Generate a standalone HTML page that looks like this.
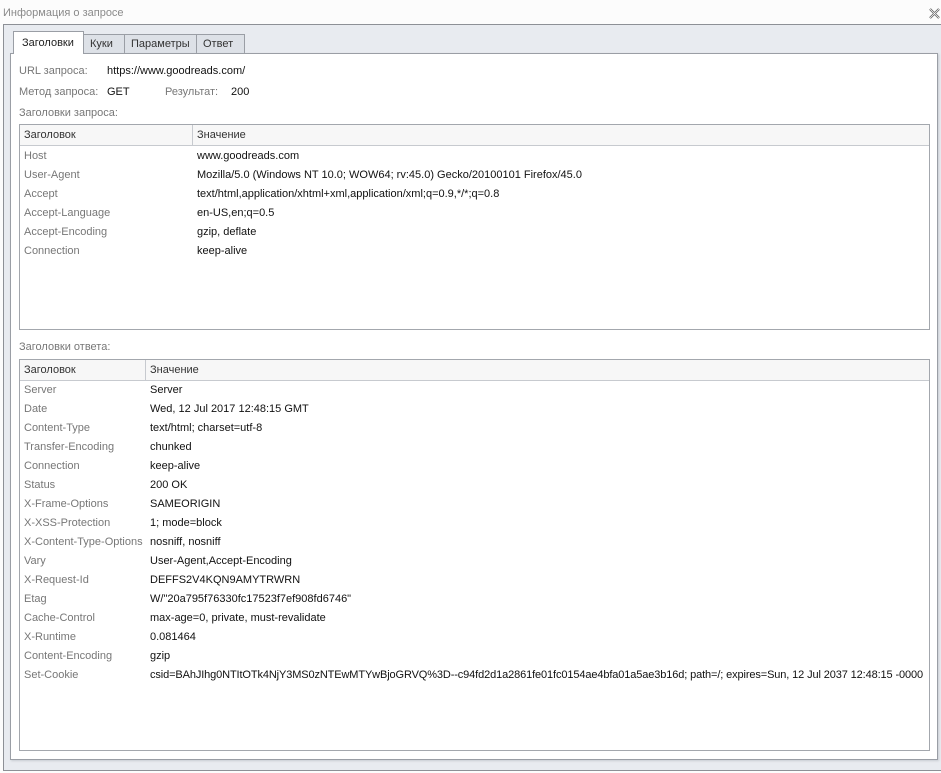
<!DOCTYPE html>
<html><head><meta charset="utf-8"><style>
*{box-sizing:border-box;margin:0;padding:0}
body{width:941px;height:773px;background:#fcfcfc;font-family:"Liberation Sans",sans-serif;font-size:11px;color:#222;position:relative;overflow:hidden}
.a{position:absolute}
.title{left:3px;top:7px;color:#8a8a8a;font-size:11px}
.frame{left:3px;top:24px;width:945px;height:747px;background:#e8ebf0;border:1px solid #8d9096;border-right:none}
.tab{top:34px;height:19px;background:#dde1e7;border:1px solid #9a9ea5;border-bottom:none;color:#333;padding:3px 0 0 6px}
.tab.act{top:31px;height:23px;background:#fff;z-index:3;padding:5px 0 0 8px;color:#222}
.panel{left:10px;top:53px;width:928px;height:707px;background:#fff;border:1px solid #9a9ea5;box-shadow:1px 1px 2px #c8ccd2}
.lbl{color:#777}
.grid{border:1px solid #a3a7ad;background:#fff;overflow:hidden}
.hdr{position:absolute;left:0;top:0;right:0;height:21px;background:#f7f7f7;border-bottom:1px solid #c7cacf}
.hdr span{position:absolute;top:4px;color:#333}
.vl{position:absolute;top:0;height:21px;width:1px;background:#c7cacf}
.row{position:absolute;height:19px;left:0;right:0}
.row .n{position:absolute;left:4px;top:3px;color:#777;white-space:nowrap}
.row .v{position:absolute;top:3px;color:#111;white-space:nowrap}
</style></head><body>
<div class="a title">Информация о запросе</div>
<svg class="a" style="left:929px;top:8px" width="11" height="11" viewBox="0 0 11 11"><path d="M1 1L10 10M10 1L1 10" stroke="#555" stroke-width="2.2"/><path d="M1 1L10 10M10 1L1 10" stroke="#fff" stroke-width="0.8"/></svg>
<div class="a frame"></div>
<div class="a tab act" style="left:13px;width:71px">Заголовки</div>
<div class="a tab" style="left:83px;width:42px">Куки</div>
<div class="a tab" style="left:124px;width:73px">Параметры</div>
<div class="a tab" style="left:196px;width:49px">Ответ</div>
<div class="a panel"></div>
<div class="a lbl" style="left:19px;top:65px">URL запроса:</div>
<div class="a" style="left:107px;top:65px;color:#111">https://www.goodreads.com/</div>
<div class="a lbl" style="left:19px;top:86px">Метод запроса:</div>
<div class="a" style="left:107px;top:86px;color:#111">GET</div>
<div class="a lbl" style="left:165px;top:86px">Результат:</div>
<div class="a" style="left:231px;top:86px;color:#111">200</div>
<div class="a lbl" style="left:19px;top:107px">Заголовки запроса:</div>

<div class="a grid" style="left:19px;top:124px;width:911px;height:206px">
<div class="hdr"><span style="left:4px">Заголовок</span><span style="left:177px">Значение</span></div>
<div class="vl" style="left:172px"></div>
<div class="row" style="top:22px"><span class="n">Host</span><span class="v" style="left:177px">www.goodreads.com</span></div>
<div class="row" style="top:41px"><span class="n">User-Agent</span><span class="v" style="left:177px">Mozilla/5.0 (Windows NT 10.0; WOW64; rv:45.0) Gecko/20100101 Firefox/45.0</span></div>
<div class="row" style="top:60px"><span class="n">Accept</span><span class="v" style="left:177px">text/html,application/xhtml+xml,application/xml;q=0.9,*/*;q=0.8</span></div>
<div class="row" style="top:79px"><span class="n">Accept-Language</span><span class="v" style="left:177px">en-US,en;q=0.5</span></div>
<div class="row" style="top:98px"><span class="n">Accept-Encoding</span><span class="v" style="left:177px">gzip, deflate</span></div>
<div class="row" style="top:117px"><span class="n">Connection</span><span class="v" style="left:177px">keep-alive</span></div>
</div>

<div class="a lbl" style="left:19px;top:341px">Заголовки ответа:</div>
<div class="a grid" style="left:19px;top:359px;width:911px;height:392px">
<div class="hdr"><span style="left:4px">Заголовок</span><span style="left:130px">Значение</span></div>
<div class="vl" style="left:125px"></div>
<div class="row" style="top:21px"><span class="n">Server</span><span class="v" style="left:130px">Server</span></div>
<div class="row" style="top:40px"><span class="n">Date</span><span class="v" style="left:130px">Wed, 12 Jul 2017 12:48:15 GMT</span></div>
<div class="row" style="top:59px"><span class="n">Content-Type</span><span class="v" style="left:130px">text/html; charset=utf-8</span></div>
<div class="row" style="top:78px"><span class="n">Transfer-Encoding</span><span class="v" style="left:130px">chunked</span></div>
<div class="row" style="top:97px"><span class="n">Connection</span><span class="v" style="left:130px">keep-alive</span></div>
<div class="row" style="top:116px"><span class="n">Status</span><span class="v" style="left:130px">200 OK</span></div>
<div class="row" style="top:135px"><span class="n">X-Frame-Options</span><span class="v" style="left:130px">SAMEORIGIN</span></div>
<div class="row" style="top:154px"><span class="n">X-XSS-Protection</span><span class="v" style="left:130px">1; mode=block</span></div>
<div class="row" style="top:173px"><span class="n">X-Content-Type-Options</span><span class="v" style="left:130px">nosniff, nosniff</span></div>
<div class="row" style="top:192px"><span class="n">Vary</span><span class="v" style="left:130px">User-Agent,Accept-Encoding</span></div>
<div class="row" style="top:211px"><span class="n">X-Request-Id</span><span class="v" style="left:130px">DEFFS2V4KQN9AMYTRWRN</span></div>
<div class="row" style="top:230px"><span class="n">Etag</span><span class="v" style="left:130px">W/"20a795f76330fc17523f7ef908fd6746"</span></div>
<div class="row" style="top:249px"><span class="n">Cache-Control</span><span class="v" style="left:130px">max-age=0, private, must-revalidate</span></div>
<div class="row" style="top:268px"><span class="n">X-Runtime</span><span class="v" style="left:130px">0.081464</span></div>
<div class="row" style="top:287px"><span class="n">Content-Encoding</span><span class="v" style="left:130px">gzip</span></div>
<div class="row" style="top:306px"><span class="n">Set-Cookie</span><span class="v" style="left:130px;letter-spacing:-0.12px">csid=BAhJIhg0NTItOTk4NjY3MS0zNTEwMTYwBjoGRVQ%3D--c94fd2d1a2861fe01fc0154ae4bfa01a5ae3b16d; path=/; expires=Sun, 12 Jul 2037 12:48:15 -0000</span></div>
</div>
</body></html>
